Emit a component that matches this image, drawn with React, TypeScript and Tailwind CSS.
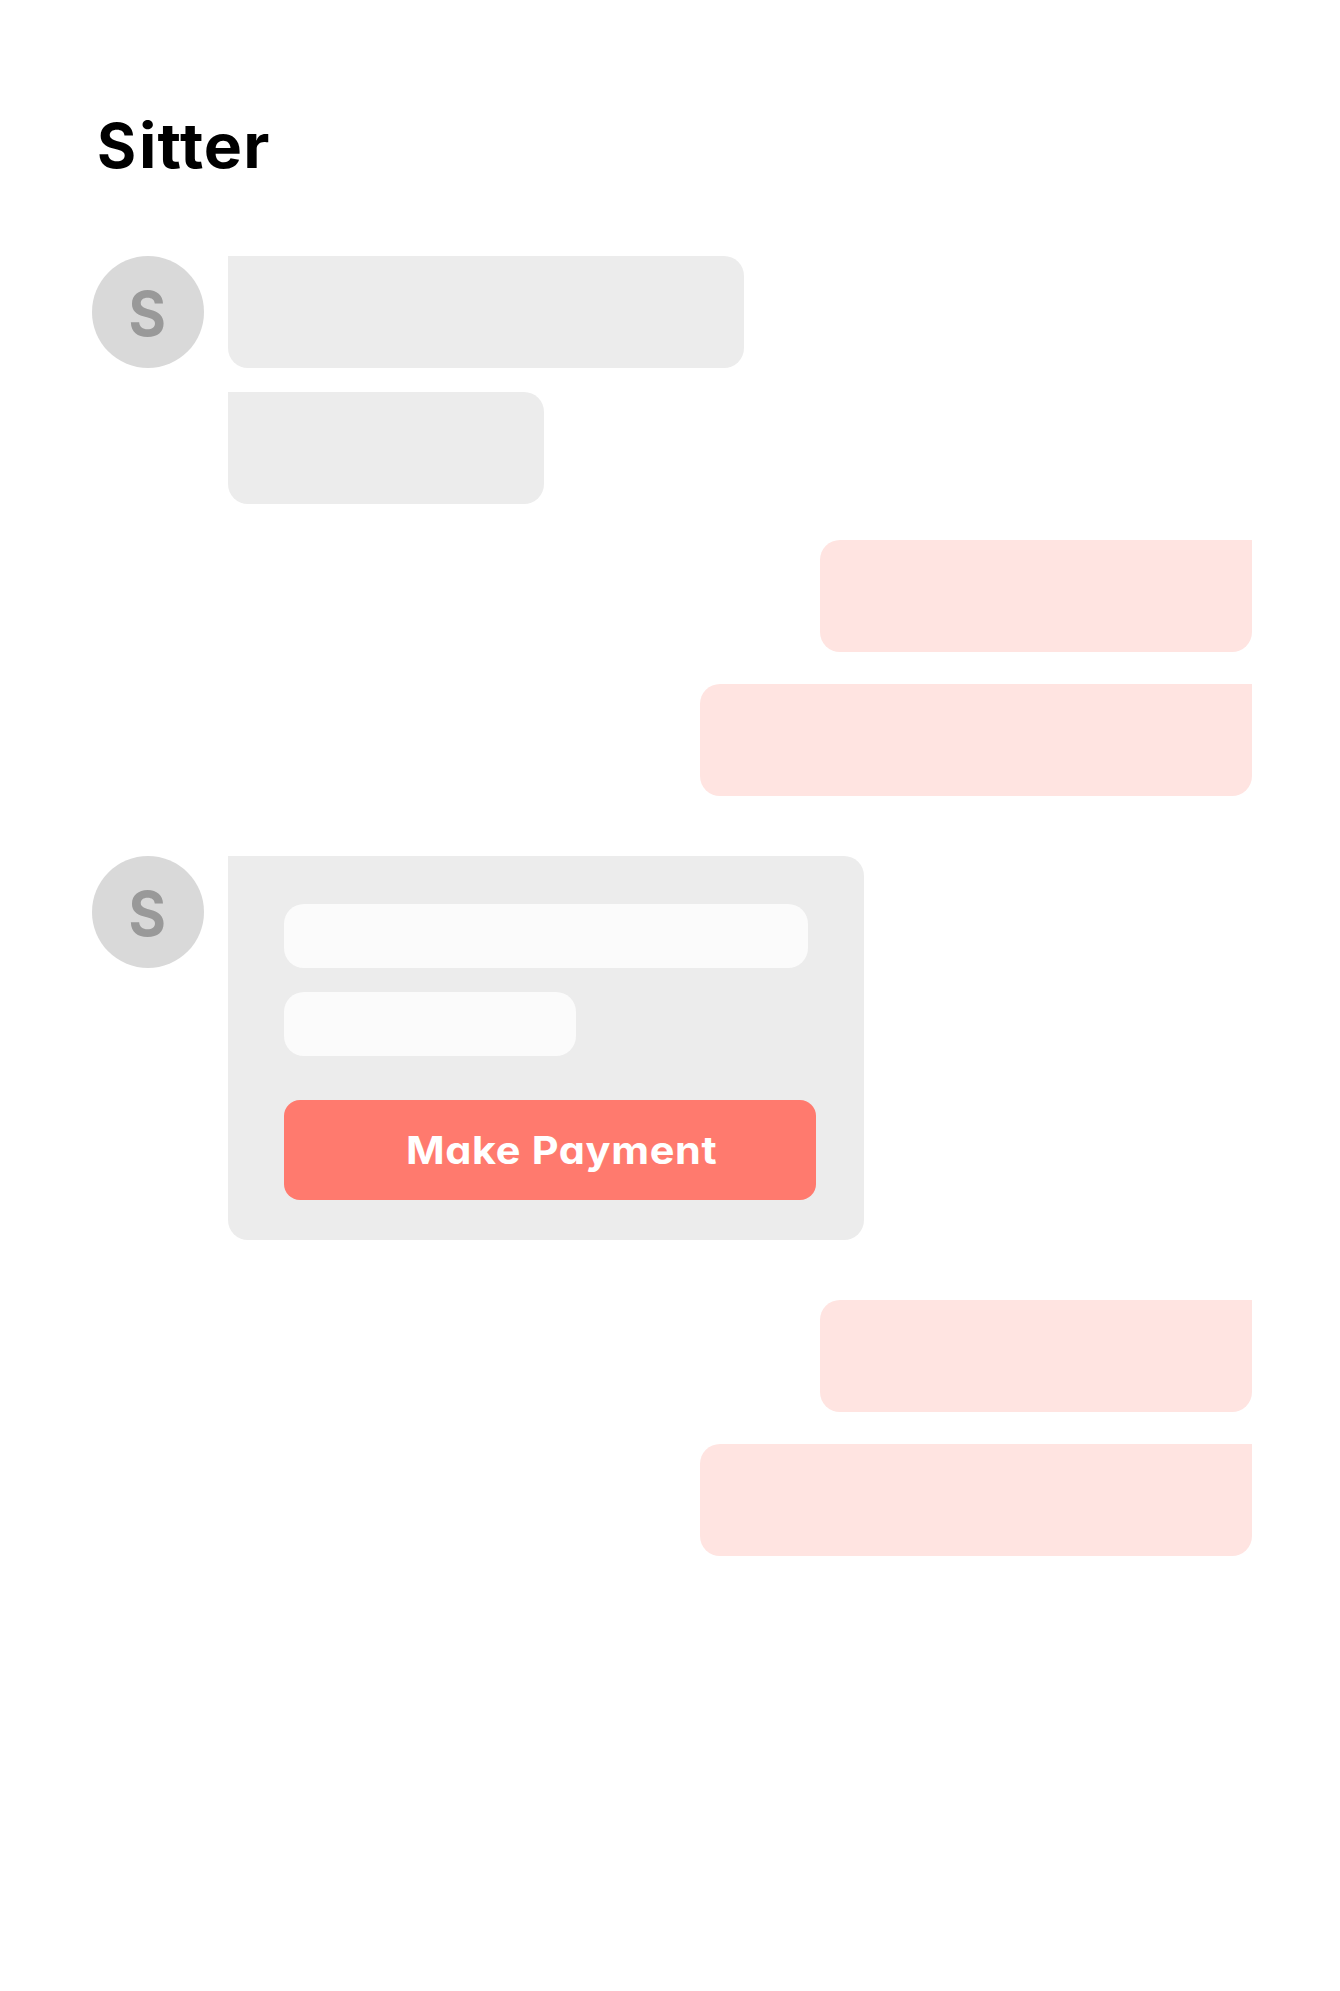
function Avatar() {
  return (
    <div className="flex size-28 shrink-0 items-center justify-center rounded-full bg-[#d9d9d9] pt-[3px] pr-[2px] text-[61.5px] leading-none font-bold text-[#999999]">
      <span className="inline-block scale-x-[0.93]">S</span>
    </div>
  );
}

function Replies() {
  return (
    <div className="flex flex-col items-end gap-8">
      <div className="h-28 w-[432px] rounded-[20px] rounded-tr-none bg-[#ffe4e1]" />
      <div className="h-28 w-[552px] rounded-[20px] rounded-tr-none bg-[#ffe4e1]" />
    </div>
  );
}

export default function App() {
  return (
    <main className="h-[1991px] w-[1340px] bg-white pt-[106px] pr-[88px] pl-[92px] font-['Inter',sans-serif] [font-feature-settings:'cv11']">
      <h1 className="flex h-20 items-center pl-[5px] text-[61.5px] leading-none font-[670] tracking-[1px] text-black">
        <span className="inline-block origin-left scale-x-[1.045]">
          <span className="-mr-px inline-block origin-left scale-x-[0.93]">S</span>
          itter
        </span>
      </h1>

      <section className="mt-[70px] flex gap-6">
        <Avatar />
        <div className="flex flex-col gap-6">
          <div className="h-28 w-[516px] rounded-[20px] rounded-tl-none bg-[#ececec]" />
          <div className="h-28 w-[316px] rounded-[20px] rounded-tl-none bg-[#ececec]" />
        </div>
      </section>

      <section className="mt-9">
        <Replies />
      </section>

      <section className="mt-[60px] flex gap-6">
        <Avatar />
        <div className="h-[384px] w-[636px] rounded-[20px] rounded-tl-none bg-[#ececec] pt-12 pl-14">
          <div className="h-16 w-[524px] rounded-[20px] bg-[#fbfbfb]" />
          <div className="mt-6 h-16 w-[292px] rounded-[20px] bg-[#fbfbfb]" />
          <button className="mt-11 flex h-[100px] w-[532px] items-center rounded-2xl bg-[#ff7a6e] pl-[122px] text-left text-[38.5px] leading-none font-[650] tracking-[0.6px] whitespace-pre text-white">
            <span className="inline-block origin-left scale-x-[1.077]">Make Payment</span>
          </button>
        </div>
      </section>

      <section className="mt-[60px]">
        <Replies />
      </section>
    </main>
  );
}
